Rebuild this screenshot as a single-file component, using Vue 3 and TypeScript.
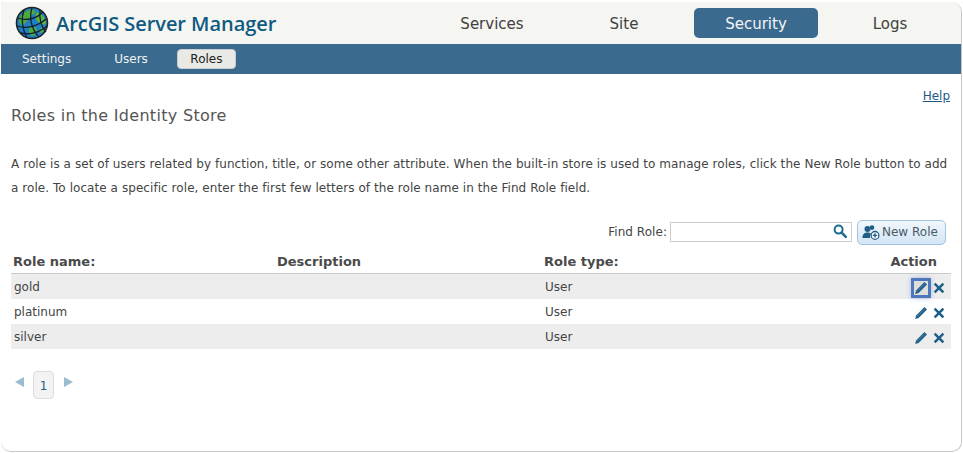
<template>
  <div class="page">
    <div class="card">
      <header class="topbar">
        <div class="brand">
          <svg class="globe" viewBox="0 0 34 34">
            <circle cx="17" cy="17" r="15.5" fill="#1f7fc4" stroke="#222" stroke-width="1.6"/>
            <path d="M6 9c4-4 9-6 13-5 3 1 1 4-2 5-2 1-1 4-4 5-3 2-3 6-6 5-3-1-4-7-1-10z" fill="#4fa83d"/>
            <path d="M22 6c4 1 8 5 9 10 0 3-3 3-5 2-2-2-4-2-5-5-1-2-1-5 1-7z" fill="#5cb13f"/>
            <path d="M15 21c3-1 7 0 7 3s-2 6-5 6-4-7-2-9z" fill="#4fa83d"/>
            <path d="M26 22l4-1-2 5-3 1z" fill="#5cb13f"/>
            <g fill="none" stroke="#14202c" stroke-width="1.3">
              <path d="M3 12c8 3 18 1 25-6"/>
              <path d="M2 20c9 3 20 1 29-7"/>
              <path d="M6 27c8 2 18 0 26-7"/>
              <path d="M9 4c-3 8-2 19 3 28"/>
              <path d="M17 2c-3 9-1 21 7 29"/>
              <path d="M25 4c-1 8 1 17 6 22"/>
            </g>
          </svg>
          <span class="brand-name">ArcGIS Server Manager</span>
        </div>
        <nav class="mainnav">
          <a v-for="item in mainTabs" :key="item" class="maintab" :class="{ active: item === 'Security' }">{{ item }}</a>
        </nav>
      </header>

      <div class="subnav">
        <a v-for="item in subTabs" :key="item" class="subtab" :class="{ active: item === 'Roles' }">{{ item }}</a>
      </div>

      <main class="content">
        <div class="help-row"><a class="help">Help</a></div>
        <h1 class="title">Roles in the Identity Store</h1>
        <p class="intro">A role is a set of users related by function, title, or some other attribute. When the built-in store is used to manage roles, click the New Role button to add a role. To locate a specific role, enter the first few letters of the role name in the Find Role field.</p>

        <div class="tools">
          <label class="find-label">Find Role:</label>
          <div class="find-box">
            <svg class="search" viewBox="0 0 14 14">
              <circle cx="5.6" cy="5.6" r="4" fill="none" stroke="#1f6c93" stroke-width="2"/>
              <path d="M8.6 8.6L12.8 12.8" stroke="#1f6c93" stroke-width="2.6" stroke-linecap="round"/>
            </svg>
          </div>
          <button class="new-role">
            <svg class="new-icon" viewBox="0 0 18 16">
              <circle cx="5.5" cy="5" r="3" fill="#1f5f86"/>
              <path d="M0.5 14c0-4 2-5.5 5-5.5 2 0 3 .6 3.6 1.6-1 1-1.4 2.4-1 3.9z" fill="#1f5f86"/>
              <circle cx="10" cy="3.6" r="2.3" fill="#1f5f86"/>
              <circle cx="13" cy="11.4" r="3.9" fill="#fff" stroke="#1f5f86" stroke-width="1.3"/>
              <path d="M13 9.2v4.4M10.8 11.4h4.4" stroke="#1f5f86" stroke-width="1.4"/>
            </svg>
            New Role
          </button>
        </div>

        <div class="table">
          <div class="row head">
            <span>Role name:</span>
            <span>Description</span>
            <span>Role type:</span>
            <span class="action-head">Action</span>
          </div>
          <div v-for="(role, i) in roles" :key="role" class="row" :class="{ odd: i % 2 === 0 }">
            <span>{{ role }}</span>
            <span></span>
            <span>User</span>
            <span class="actions">
              <span class="edit" :class="{ focused: i === 0 }">
                <svg viewBox="0 0 14 14">
                  <path d="M10.4 1l2.6 2.6-8.4 8.4-3.4 1 .9-3.5z" fill="#1f6089"/>
                  <path d="M2.8 10.6l7.8-7.8" stroke="#5f93b5" stroke-width=".6"/>
                </svg>
              </span>
              <svg class="del" viewBox="0 0 12 12">
                <path d="M1.6 1.6L10.4 10.4M10.4 1.6L1.6 10.4" stroke="#1f6089" stroke-width="2.5"/>
              </svg>
            </span>
          </div>
        </div>

        <div class="pager">
          <span class="arrow left"></span>
          <span class="page-num">1</span>
          <span class="arrow right"></span>
        </div>
      </main>
    </div>
  </div>
</template>

<script setup lang="ts">
const mainTabs: string[] = ['Services', 'Site', 'Security', 'Logs']
const subTabs: string[] = ['Settings', 'Users', 'Roles']
const roles: string[] = ['gold', 'platinum', 'silver']
</script>

<style>
html, body {
  margin: 0;
  background: #fff;
}
</style>

<style scoped>
.page {
  width: 963px;
  height: 453px;
  padding: 2px 1px 1px 1px;
  box-sizing: border-box;
  font-family: "DejaVu Sans", Verdana, sans-serif;
  overflow: hidden;
}

.card {
  width: 961px;
  height: 450px;
  box-sizing: border-box;
  border-right: 1px solid #c8c8c8;
  border-bottom: 1px solid #c8c8c8;
  border-radius: 0 10px 10px 10px;
  overflow: hidden;
  background: #fff;
}

.topbar {
  height: 42px;
  background: #f5f5f1;
  display: flex;
  align-items: center;
  justify-content: space-between;
}

.brand {
  display: flex;
  align-items: center;
  gap: 7px;
  padding-left: 14px;
}

.globe {
  width: 34px;
  height: 34px;
}

.brand-name {
  font-family: "Open Sans", sans-serif;
  font-size: 20px;
  font-weight: 600;
  letter-spacing: -0.05px;
  color: #0f5a82;
}

.mainnav {
  display: flex;
  gap: 8px;
  padding-right: 11px;
}

.maintab {
  width: 124px;
  height: 30px;
  box-sizing: border-box;
  line-height: 32px;
  text-align: center;
  font-size: 15px;
  color: #404040;
  border-radius: 5px;
}

.maintab:last-child {
  padding-left: 4px;
}

.maintab.active {
  background: #3b6a8f;
  color: #f5f5f5;
}

.subnav {
  height: 30px;
  background: #3b6a8f;
  display: flex;
  align-items: center;
  padding-left: 21px;
  gap: 43px;
}

.subtab {
  font-size: 12px;
  color: #f2f2f2;
}

.subtab.active {
  background: #e9e9e5;
  color: #222;
  border: 1px solid #c9ccce;
  border-radius: 4px;
  height: 20px;
  box-sizing: border-box;
  line-height: 18px;
  padding: 0 13px 0 12.5px;
  margin-left: -14px;
}

.content {
  padding: 0 10px;
}

.help-row {
  display: flex;
  justify-content: flex-end;
  padding: 14px 1px 0 0;
  height: 16px;
}

.help {
  font-size: 12px;
  line-height: 16px;
  color: #1b5a87;
  text-decoration: underline;
}

.title {
  margin: 1px 0 0;
  font-size: 16px;
  font-weight: 400;
  letter-spacing: 0.3px;
  line-height: 22px;
  color: #555;
}

.intro {
  margin: 25px 0 0;
  font-size: 12px;
  letter-spacing: 0.062px;
  line-height: 24px;
  color: #444;
}

.tools {
  display: flex;
  align-items: center;
  justify-content: flex-end;
  margin-top: 19px;
  padding-right: 5px;
  height: 26px;
}

.find-label {
  margin-right: 3px;
  font-size: 12px;
  letter-spacing: 0.05px;
  color: #444;
}

.find-box {
  width: 176px;
  height: 18px;
  border: 1px solid #ccc;
  display: flex;
  justify-content: flex-end;
  padding-right: 4px;
  box-sizing: content-box;
}

.search {
  width: 14px;
  height: 14px;
  margin-top: 1px;
}

.new-role {
  margin-left: 5px;
  width: 89px;
  height: 25px;
  padding: 0 0 0 4px;
  display: flex;
  align-items: center;
  gap: 2px;
  border: 1px solid #9fc3e0;
  border-radius: 5px;
  background: linear-gradient(#f1f7fc, #d3e5f5);
  font-family: inherit;
  font-size: 12px;
  color: #4a5a66;
}

.new-icon {
  width: 18px;
  height: 16px;
  flex: none;
}

.table {
  margin-top: 5px;
  width: 940px;
}

.row {
  display: grid;
  grid-template-columns: 264px 267px 1fr 120px;
  align-items: center;
  height: 25px;
  padding-left: 3px;
  font-size: 12px;
  color: #444;
}

.row.head {
  height: 24px;
  border-bottom: 1px solid #c9c9c9;
  font-weight: 700;
  font-size: 13px;
  color: #4a4a4a;
  padding-left: 2px;
  box-sizing: border-box;
}

.row.odd {
  background: #ededed;
}

.action-head {
  text-align: right;
  padding-right: 14px;
}

.actions {
  display: flex;
  justify-content: flex-end;
  align-items: center;
  gap: 5px;
  padding-right: 6px;
}

.edit {
  width: 14px;
  height: 14px;
  display: flex;
  margin-top: 3px;
}

.edit svg {
  width: 14px;
  height: 14px;
}

.edit.focused {
  background: #dedede;
  box-shadow: 0 0 0 3px #4f77bd, 0 0 5px 3px rgba(79, 119, 189, 0.45);
}

.del {
  width: 12px;
  height: 12px;
  margin-top: 3px;
}

.pager {
  display: flex;
  align-items: center;
  margin: 22px 0 0 4px;
  gap: 9px;
}

.arrow {
  width: 0;
  height: 0;
  border-top: 5px solid transparent;
  border-bottom: 5px solid transparent;
  margin-top: -6px;
}

.arrow.left {
  border-right: 9px solid #9dbbd0;
}

.arrow.right {
  border-left: 9px solid #9dbbd0;
  margin-left: 1px;
}

.page-num {
  width: 21px;
  height: 28px;
  box-sizing: border-box;
  border: 1px solid #dcdcdc;
  border-radius: 4px;
  background: #f3f3f3;
  text-align: center;
  font-size: 12px;
  line-height: 28px;
  color: #1f5f86;
}
</style>
